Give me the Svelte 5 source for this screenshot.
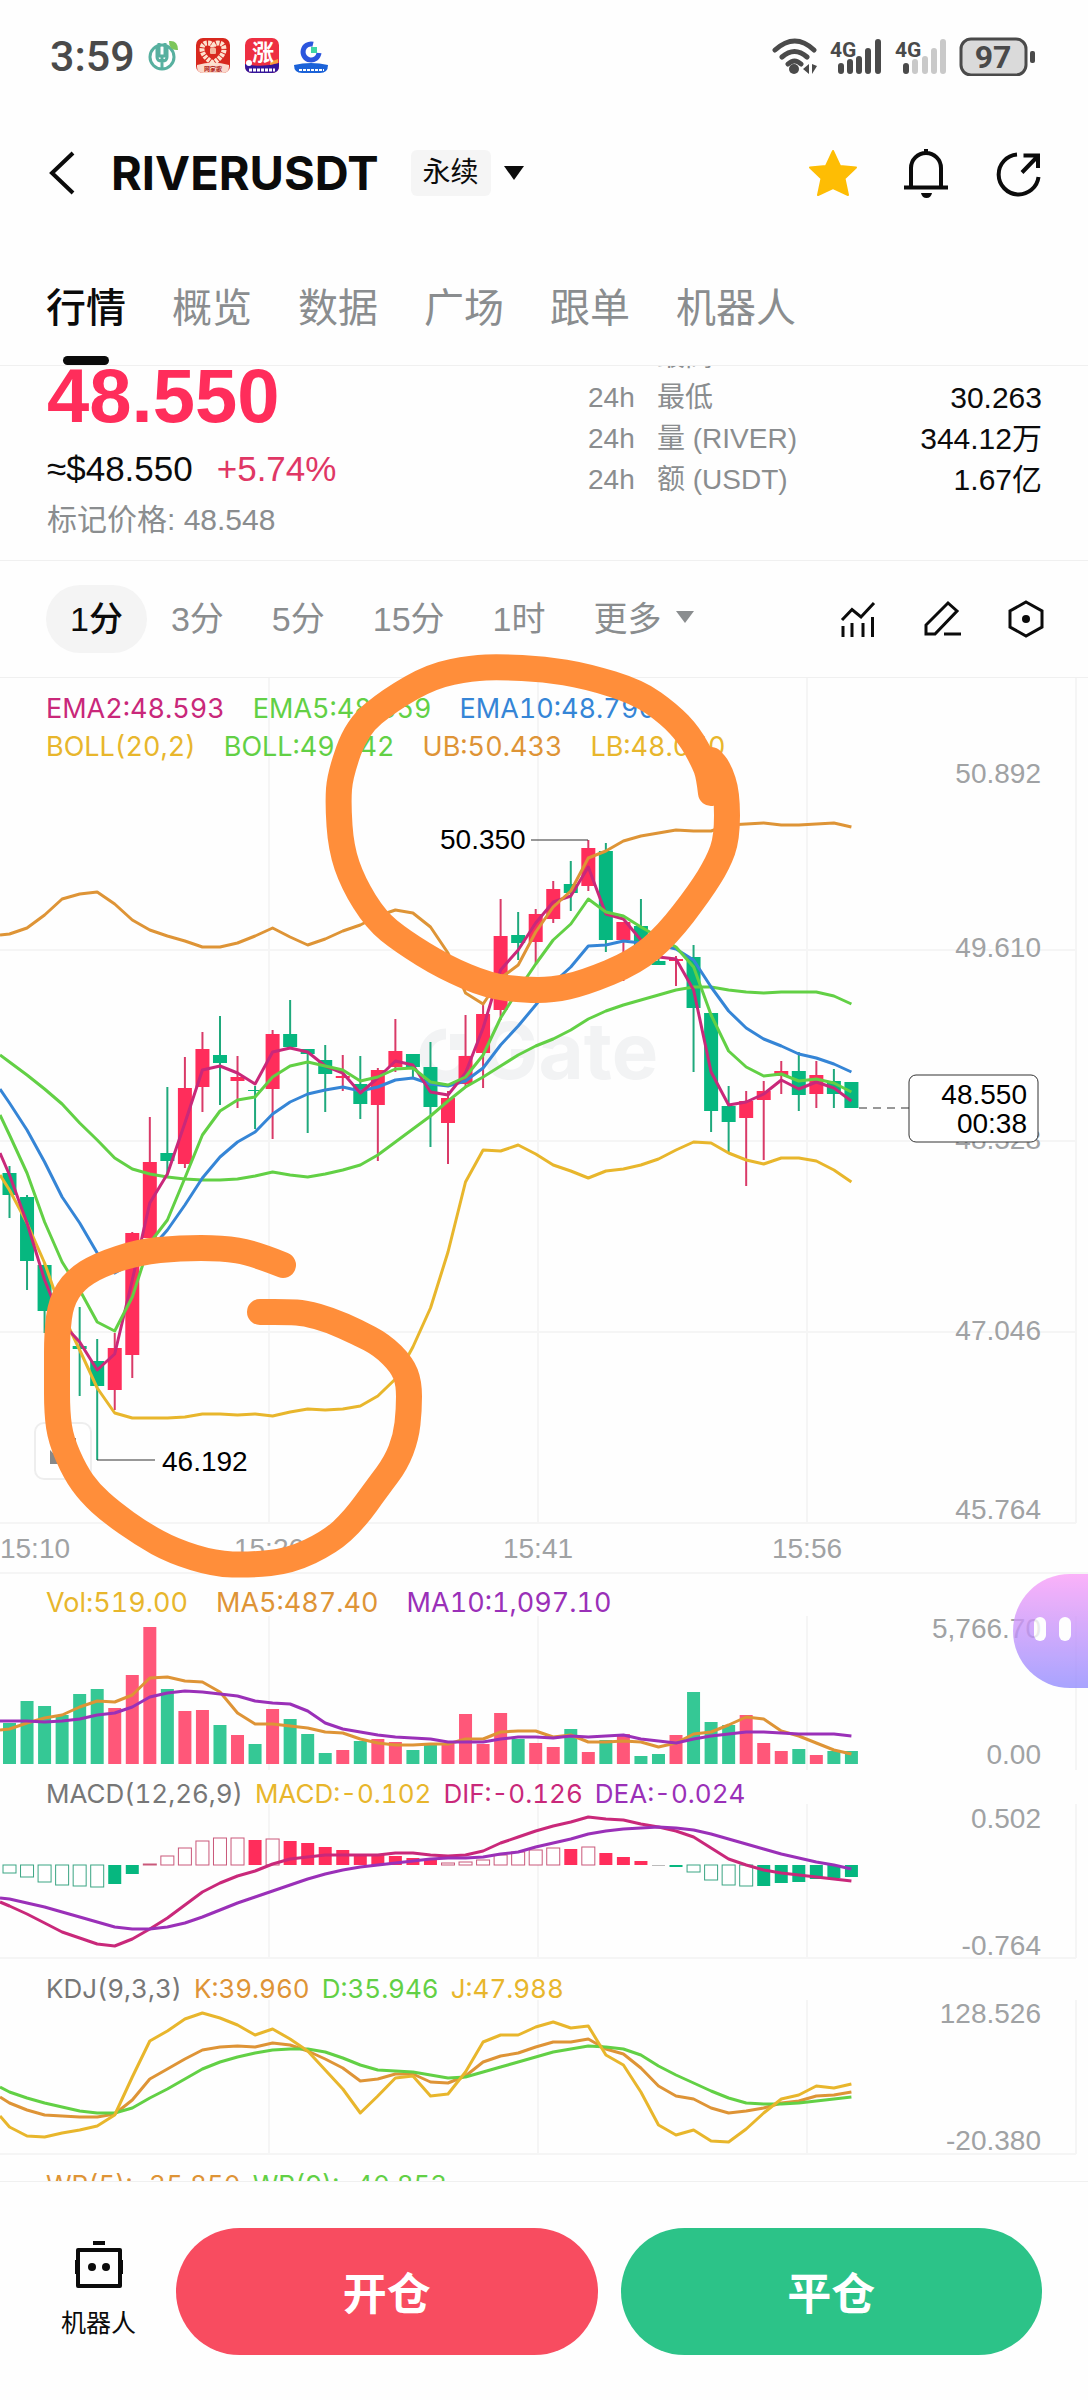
<script>
	let activeTab = "行情";
	let activeFrame = "1分";

	const tabs = ["行情", "概览", "数据", "广场", "跟单", "机器人"];
	const frames = ["1分", "3分", "5分", "15分", "1时"];
	const stats = [
		["最高", ""],
		["最低", "30.263"],
		["量 (RIVER)", "344.12万"],
		["额 (USDT)", "1.67亿"],
	];

	const MAGENTA = "#c9287a";
	const GREEN = "#62d045";
	const BLUE = "#3585d6";
	const ORANGE = "#de9436";
	const GOLD = "#e8b62c";
	const PURPLE = "#9a30b8";
	const UP = "#ff2d5b";
	const DOWN = "#06b77f";

	const mainLegend = [
		[
			["EMA2:48.593", MAGENTA],
			["EMA5:48.659", GREEN],
			["EMA10:48.790", BLUE],
		],
		[
			["BOLL(20,2)", GOLD],
			["BOLL:49.242", GREEN],
			["UB:50.433", ORANGE],
			["LB:48.050", GOLD],
		],
	];
	const volLegend = [
		["Vol:519.00", GOLD],
		["MA5:487.40", ORANGE],
		["MA10:1,097.10", PURPLE],
	];
	const macdLegend = [
		["MACD(12,26,9)", "#777"],
		["MACD:-0.102", GOLD],
		["DIF:-0.126", MAGENTA],
		["DEA:-0.024", PURPLE],
	];
	const kdjLegend = [
		["KDJ(9,3,3)", "#777"],
		["K:39.960", ORANGE],
		["D:35.946", GREEN],
		["J:47.988", GOLD],
	];
	const wrLegend = [
		["WR(5):-35.850", ORANGE],
		["WR(9):-40.853", GREEN],
	];

	const STEP = 17.54;
	const x = (i) => 9.5 + i * STEP;

	// high, body top, body bottom, low, 1 = up
	const candles = [
		[488, 495, 517, 540, 0], [517, 519, 583, 612, 0], [585, 587, 633, 655, 0], [628, 633, 668, 690, 0],
		[629, 668, 671, 718, 0], [661, 683, 708, 782, 0], [655, 670, 712, 732, 1], [554, 555, 677, 700, 1],
		[439, 484, 560, 560, 1], [409, 475, 483, 500, 0], [379, 410, 486, 490, 1], [354, 371, 409, 434, 1],
		[338, 377, 385, 427, 0], [378, 399, 403, 430, 1], [408, 412, 413, 451, 0], [352, 356, 411, 461, 1],
		[322, 356, 369, 369, 0], [371, 371, 376, 455, 0], [367, 382, 396, 434, 0], [377, 398, 400, 413, 1],
		[378, 406, 426, 441, 0], [390, 392, 427, 483, 1], [341, 373, 389, 394, 1], [376, 376, 389, 400, 0],
		[364, 389, 429, 469, 0], [413, 420, 445, 486, 1], [337, 378, 406, 408, 1], [325, 336, 375, 410, 1],
		[221, 258, 332, 342, 1], [234, 257, 265, 282, 0], [231, 236, 264, 285, 1], [203, 211, 241, 245, 1],
		[183, 206, 215, 233, 0], [162, 170, 208, 213, 1], [165, 173, 262, 274, 0], [244, 244, 262, 303, 1],
		[221, 248, 269, 279, 0], [279, 283, 287, 287, 0], [278, 281, 283, 308, 1], [267, 279, 330, 394, 0],
		[335, 335, 433, 454, 0], [408, 428, 444, 474, 0], [413, 423, 440, 508, 1], [403, 413, 422, 482, 1],
		[383, 393, 398, 416, 1], [374, 393, 417, 433, 0], [383, 397, 416, 430, 1], [391, 403, 416, 430, 0],
		[404, 404, 430, 430, 0],
	];

	// every series starts with its value at the left edge, then one value per candle
	const mainLines = [
		[GOLD, [497, 512, 545, 585, 635, 672, 710, 735, 740, 740, 740, 739, 736, 736, 737, 736, 738, 734, 731, 732, 731, 728, 718, 701, 669, 630, 574, 504, 472, 473, 467, 476, 487, 493, 500, 493, 491, 487, 481, 472, 464, 465, 475, 482, 486, 480, 480, 483, 492, 504]],
		[GREEN, [377, 384, 397, 411, 426, 445, 462, 480, 491, 496, 499, 501, 502, 502, 501, 498, 494, 497, 499, 496, 492, 487, 477, 464, 451, 438, 423, 409, 399, 388, 377, 368, 361, 352, 341, 333, 327, 322, 317, 312, 309, 309, 312, 314, 315, 314, 314, 314, 318, 326]],
		[BLUE, [411, 425, 452, 484, 519, 545, 575, 595, 585, 572, 552, 527, 500, 479, 464, 454, 436, 424, 416, 412, 409, 413, 409, 402, 400, 406, 408, 403, 390, 367, 348, 327, 305, 289, 268, 267, 263, 265, 267, 271, 282, 309, 333, 350, 361, 368, 376, 380, 386, 394]],
		[MAGENTA, [475, 497, 545, 602, 645, 664, 692, 676, 602, 525, 496, 445, 392, 388, 395, 406, 374, 370, 374, 388, 395, 415, 400, 383, 387, 414, 417, 395, 350, 292, 272, 245, 224, 218, 189, 236, 241, 262, 279, 281, 312, 394, 427, 424, 416, 402, 411, 404, 410, 423]],
		[GREEN, [437, 457, 495, 544, 584, 612, 644, 653, 619, 565, 542, 500, 457, 433, 422, 419, 399, 388, 384, 388, 392, 403, 399, 391, 390, 404, 407, 399, 377, 340, 312, 286, 262, 246, 221, 234, 238, 249, 259, 269, 289, 337, 373, 389, 398, 396, 403, 401, 405, 414]],
		[ORANGE, [257, 256, 250, 237, 221, 216, 214, 226, 242, 252, 258, 263, 269, 269, 265, 258, 250, 259, 267, 261, 253, 247, 238, 232, 235, 249, 275, 315, 326, 300, 287, 254, 229, 213, 180, 173, 163, 158, 155, 152, 153, 153, 147, 146, 145, 147, 147, 146, 145, 149]],
	];

	const volumes = [149, 127, 132, 141, 120, 115, 134, 101, 53, 115, 137, 136, 151, 161, 170, 135, 145, 160, 179, 176, 167, 165, 168, 176, 170, 170, 140, 170, 139, 165, 169, 173, 155, 178, 166, 160, 182, 180, 161, 118, 148, 151, 141, 169, 177, 175, 181, 177, 177];
	const volLines = [
		[ORANGE, [156, 155, 149, 144, 141, 133, 127, 128, 121, 104, 103, 107, 108, 118, 139, 150, 150, 152, 154, 158, 159, 165, 169, 171, 171, 170, 170, 165, 165, 158, 157, 157, 163, 161, 168, 168, 167, 168, 173, 169, 160, 158, 151, 143, 145, 157, 162, 169, 176, 180]],
		[PURPLE, [147, 147, 147, 148, 147, 145, 141, 139, 133, 123, 119, 117, 118, 120, 122, 127, 129, 130, 137, 149, 155, 158, 161, 163, 164, 165, 168, 168, 168, 165, 163, 163, 164, 162, 163, 162, 161, 165, 167, 169, 165, 162, 160, 158, 158, 159, 160, 160, 160, 162]],
	];

	const macd = [-8, -12, -17, -20, -21, -22, -19, -9, 1, 9, 17, 24, 27, 27, 25, 26, 24, 22, 18, 15, 11, 10, 9, 7, 5, 2, 3, 5, 10, 13, 15, 17, 16, 18, 12, 8, 4, 0, -2, -7, -15, -20, -21, -21, -18, -17, -14, -13, -12];
	const macdLines = [
		[MAGENTA, [132, 136, 144, 153, 162, 168, 174, 176, 169, 159, 148, 135, 122, 113, 106, 101, 94, 89, 87, 85, 85, 85, 85, 83, 83, 85, 86, 85, 81, 73, 67, 61, 56, 52, 47, 49, 50, 54, 57, 61, 67, 78, 89, 95, 100, 103, 105, 107, 109, 111]],
		[PURPLE, [128, 129, 133, 137, 142, 147, 152, 157, 159, 159, 157, 153, 147, 140, 133, 127, 121, 115, 109, 104, 100, 97, 95, 93, 91, 89, 88, 88, 87, 84, 82, 77, 73, 69, 64, 61, 59, 58, 57, 58, 60, 64, 69, 74, 79, 84, 88, 92, 95, 99]],
	];

	const kdjLines = [
		[ORANGE, [137, 143, 150, 155, 156, 157, 157, 154, 140, 119, 109, 99, 90, 87, 86, 87, 83, 85, 91, 99, 108, 121, 119, 114, 114, 122, 123, 116, 102, 96, 93, 87, 82, 82, 79, 89, 94, 108, 126, 136, 139, 148, 153, 151, 148, 143, 141, 136, 135, 132]],
		[GREEN, [127, 132, 138, 143, 147, 151, 153, 153, 148, 138, 129, 119, 109, 102, 97, 93, 90, 89, 89, 92, 98, 105, 110, 111, 112, 115, 118, 117, 112, 107, 102, 97, 92, 89, 86, 87, 89, 95, 106, 115, 123, 131, 138, 143, 144, 144, 143, 141, 139, 137]],
		[GOLD, [156, 167, 176, 177, 173, 170, 166, 155, 117, 81, 71, 59, 53, 58, 65, 75, 69, 79, 91, 110, 129, 153, 136, 118, 116, 136, 134, 112, 82, 75, 75, 67, 62, 68, 66, 95, 105, 132, 165, 175, 170, 181, 182, 169, 153, 139, 135, 126, 128, 124]],
	];

	const gridX = [269, 538, 807, 1076];

	const isHollow = (i) => i === 0 || Math.abs(macd[i]) > Math.abs(macd[i - 1]) || [8, 12, 13, 25, 42].includes(i);
	const isFilled = (i) => macd[i] < 0 && (i === 38 || i > 42);

	function line(values) {
		return values.map((y, i) => `${i === 0 ? 0 : x(i - 1).toFixed(1)},${y}`).join(" ");
	}

	const marks = [
		[[711, 115], [709, 98], [704, 84], [689, 57], [669, 36], [638, 14], [586, -2], [544, -9], [500, -11], [472, -10], [432, -2], [390, 22], [357, 49], [340, 97], [338, 125], [341, 170], [353, 205], [376, 242], [402, 263], [444, 289], [489, 308], [524, 312], [552, 312], [584, 305], [635, 284], [667, 257], [700, 214], [718, 185], [727, 160], [727, 115], [719, 91], [711, 82]],
		[[283, 587], [253, 575], [222, 570], [180, 570], [139, 574], [99, 587], [75, 602], [61, 624], [57, 655], [57, 695], [57, 735], [61, 762], [75, 794], [90, 815], [111, 834], [142, 856], [173, 873], [215, 886], [250, 887], [290, 883], [330, 864], [354, 842], [378, 809], [396, 785], [406, 759], [409, 732], [409, 705], [402, 687], [382, 667], [357, 654], [330, 642], [305, 635], [288, 634], [260, 634]],
	];

	function smooth(points) {
		let d = `M${points[0]}`;
		for (let i = 1; i < points.length - 1; i++) {
			const [ax, ay] = points[i];
			const [bx, by] = points[i + 1];
			d += ` Q${ax},${ay} ${(ax + bx) / 2},${(ay + by) / 2}`;
		}
		return d + ` L${points[points.length - 1]}`;
	}
</script>

<div class="page">
	<div class="status">
		<span class="time">3:59</span>
		<div class="apps">
			<svg width="35" height="36" viewBox="0 0 35 36" aria-hidden="true">
				<circle cx="15" cy="19" r="12" fill="none" stroke="#57b09f" stroke-width="3" />
				<path d="M12 5v13h6V5M15 18v14M10 9v10q0 4 5 4t5-4V9" fill="none" stroke="#57b09f" stroke-width="3" />
				<path d="M22 3q9-1 9 9q-9 1-9-9z" fill="#7cc65a" />
			</svg>
			<svg width="35" height="36" viewBox="0 0 35 36" aria-hidden="true">
				<rect width="34" height="35" rx="7" fill="#d8281e" />
				<path d="M1 27q16-5 32 0v2q0 6-7 6H8q-7 0-7-6z" fill="#fbd9cc" />
				<path d="M17 25Q6 18 6 11.500t6-6.500q4 0 5 4q1-4 5-4q6 0 6 6.500T17 25z" fill="none" stroke="#fde3cf" stroke-width="5" stroke-dasharray="3 1" />
				<rect x="14" y="10" width="6" height="6" rx="1" fill="#f3b9a0" />
				<text x="17" y="33" class="app-tag" fill="#b3261b" text-anchor="middle">网家歌</text>
			</svg>
			<svg width="35" height="36" viewBox="0 0 35 36" aria-hidden="true">
				<rect width="34" height="35" rx="7" fill="#ee2f42" />
				<path d="M0 26q17 4 34-1v3q0 7-7 7H7q-7 0-7-7z" fill="#35169a" />
				<path d="M25 24l8-3v4l-8 2z" fill="#f6a13d" />
				<text x="18" y="22" class="app-char" fill="#fff" text-anchor="middle">涨</text>
				<circle cx="4" cy="25" r="3" fill="#fff" />
				<path d="M4 32h26" stroke="#fff" stroke-width="3" stroke-dasharray="3 1" />
			</svg>
			<svg width="35" height="36" viewBox="0 0 35 36" aria-hidden="true">
				<path d="M19 6.200A8 8 0 1 0 25 15" fill="none" stroke="#2b55dd" stroke-width="5" />
				<rect x="17" y="9" width="6" height="6" fill="#3fd6a4" />
				<path d="M0 27q17-4 34 0q0 8-8 8H8q-8 0-8-8z" fill="#1b62d8" />
				<path d="M5 32h25" stroke="#fff" stroke-width="2" stroke-dasharray="3 1" />
			</svg>
		</div>
		<svg class="signals" width="267" height="40" viewBox="0 0 267 40" aria-hidden="true">
			<g fill="none" stroke="#4a4a4a" stroke-width="5" stroke-linecap="round">
				<path d="M4 14q20-18 39 0M11 21q12.500-11 25 0M17 28q6.500-6 13 0" />
			</g>
			<circle cx="23" cy="33" r="5" fill="#4a4a4a" />
			<path d="M38 28v10l-6-5zM41 28v10l5-8z" fill="#4a4a4a" />
			<text x="59" y="21" class="net">4G</text>
			<text x="124" y="21" class="net">4G</text>
			<g stroke="#4a4a4a" stroke-width="6" stroke-linecap="round">
				<path d="M70 30v5M79 26v9M88 23v12M97 15v20M107 6v29M135 30v5" />
				<path d="M144 26v9M154 23v12M163 15v20M172 6v29" stroke="#c9c9c9" />
			</g>
			<rect x="190" y="3" width="65" height="36" rx="10" fill="#dadada" stroke="#4a4a4a" stroke-width="3" />
			<rect x="259" y="15" width="5" height="12" rx="2" fill="#4a4a4a" />
			<text x="222" y="32" class="battery" text-anchor="middle">97</text>
		</svg>
	</div>

	<header class="title-row">
		<button class="icon-btn" aria-label="返回">
			<svg width="26" height="44" viewBox="0 0 26 44"><path d="M24 2L3 22L24 42" fill="none" stroke="#0b0b0b" stroke-width="4" /></svg>
		</button>
		<h1>RIVERUSDT</h1>
		<button class="pair-type"><span class="tag">永续</span><span class="caret"></span></button>
		<div class="actions">
			<button class="icon-btn" aria-label="收藏">
				<svg width="50" height="50" viewBox="0 0 50 50"><path d="M25 3L32 18L48 19.500L36.500 30.500L40 47L25 40L10 47L13.500 30.500L2 19.500L18 18Z" fill="#febd04" stroke="#febd04" stroke-width="2" stroke-linejoin="round" /></svg>
			</button>
			<button class="icon-btn" aria-label="提醒">
				<svg width="50" height="50" viewBox="0 0 50 50"><path d="M10 39V20a15 15 0 0 1 30 0V39M3 39.500H47M25 1V7" fill="none" stroke="#0b0b0b" stroke-width="4" /><path d="M20 45h11q-1 5-5.500 5T20 45z" fill="#0b0b0b" /></svg>
			</button>
			<button class="icon-btn" aria-label="分享">
				<svg width="50" height="50" viewBox="0 0 50 50"><path d="M23 6.500A20 20 0 1 0 44.500 29M28 24.500L43 9M29.500 7.500H44V20" fill="none" stroke="#0b0b0b" stroke-width="4" /></svg>
			</button>
		</div>
	</header>

	<nav class="tabs">
		{#each tabs as tab}
			<button class:active={tab === activeTab} on:click={() => (activeTab = tab)}>{tab}</button>
		{/each}
	</nav>

	<section class="ticker">
		<div>
			<div class="price">48.550</div>
			<div class="change"><span>≈$48.550</span><span class="up">+5.74%</span></div>
			<div class="mark">标记价格: 48.548</div>
		</div>
		<dl class="stats">
			{#each stats as [label, value]}
				<div class="stat">
					<dt><span>24h</span>{label}</dt>
					<dd>{value}</dd>
				</div>
			{/each}
		</dl>
	</section>

	<div class="toolbar">
		{#each frames as frame}
			<button class="frame" class:active={frame === activeFrame} on:click={() => (activeFrame = frame)}>{frame}</button>
		{/each}
		<button class="frame more">更多<span class="caret"></span></button>
		<div class="tools">
			<button class="icon-btn" aria-label="指标">
				<svg width="40" height="40" viewBox="0 0 40 40"><path d="M4 21L14 10.500L23 18L36 4M5 27V38M14 24V38M25 24V38M34.500 18V38" fill="none" stroke="#0b0b0b" stroke-width="3" /></svg>
			</button>
			<button class="icon-btn" aria-label="画线">
				<svg width="40" height="40" viewBox="0 0 40 40"><path d="M4 35V26L26 4L35 12L13 35ZM22 35H39" fill="none" stroke="#0b0b0b" stroke-width="3" /></svg>
			</button>
			<button class="icon-btn" aria-label="设置">
				<svg width="40" height="40" viewBox="0 0 40 40"><path d="M20 3L36 12V28L20 37L4 28V12Z" fill="none" stroke="#0b0b0b" stroke-width="3" /><circle cx="20" cy="20" r="4" fill="#0b0b0b" /></svg>
			</button>
		</div>
	</div>

	<section class="panel">
		<svg class="plot" viewBox="0 0 1088 896">
			<g class="grid">
				{#each gridX as gx}<path d="M{gx} 0V845" />{/each}
				<path d="M0 272H1076M0 463H1076M0 654H1076M0 845H1076" />
				<path d="M0 895H1088" />
			</g>
			<g class="watermark">
				<path d="M446 356A21 21 0 1 0 467 377" fill="none" stroke="#f2f3f4" stroke-width="11" />
				<rect x="450" y="356" width="16" height="16" />
				<text x="480" y="401">Gate</text>
			</g>
			<g class="axis" text-anchor="end">
				<text x="1041" y="105">50.892</text>
				<text x="1041" y="279">49.610</text>
				<text x="1041" y="471">48.328</text>
				<text x="1041" y="662">47.046</text>
				<text x="1041" y="841">45.764</text>
			</g>
			<g class="axis" text-anchor="middle">
				<text x="35" y="880">15:10</text>
				<text x="269" y="880">15:26</text>
				<text x="538" y="880">15:41</text>
				<text x="807" y="880">15:56</text>
			</g>
			{#each candles as [high, top, bottom, low, up], i}
				<path d="M{x(i)} {high}V{low}" stroke={up ? "#d93a68" : "#1fa97c"} stroke-width="2" />
				<rect x={x(i) - 7} y={top} width="14" height={bottom - top} fill={up ? UP : DOWN} />
			{/each}
			{#each mainLines as [color, values]}
				<polyline points={line(values)} stroke={color} />
			{/each}
			<g class="note">
				<path d="M531 162H588M97 782H155" />
				<path d="M859 430H909" stroke-dasharray="8 6" />
				<text x="440" y="171">50.350</text>
				<text x="162" y="793">46.192</text>
				<rect x="909" y="397" width="129" height="67" rx="7" fill="#fff" />
				<text x="1027" y="426" text-anchor="end">48.550</text>
				<text x="1027" y="455" text-anchor="end">00:38</text>
			</g>
		</svg>
		<div class="legend main">
			{#each mainLegend as row}
				<div class="legend-row">
					{#each row as [text, color]}<span style="color: {color}">{text}</span>{/each}
				</div>
			{/each}
		</div>
		<button class="expand" aria-label="全屏">
			<svg width="28" height="28" viewBox="0 0 28 28"><path d="M1 13L15 27H1ZM27 15L13 1H27Z" fill="#888" /></svg>
		</button>
		<svg class="marks" viewBox="0 0 1088 896" aria-hidden="true">
			{#each marks as points}<path d={smooth(points)} />{/each}
		</svg>
	</section>

	<section class="panel">
		<svg class="plot" viewBox="0 0 1088 196">
			<g class="grid">
				{#each gridX as gx}<path d="M{gx} 42V196" />{/each}
			</g>
			{#each volumes as top, i}
				<rect x={x(i) - 6.5} y={top} width="13" height={190 - top} fill={candles[i][4] ? "#ff5779" : "#35c895"} />
			{/each}
			{#each volLines as [color, values]}
				<polyline points={line(values)} stroke={color} />
			{/each}
			<g class="axis" text-anchor="end">
				<text x="1041" y="64">5,766.70</text>
				<text x="1041" y="190">0.00</text>
			</g>
		</svg>
		<div class="legend vol">
			<div class="legend-row">
				{#each volLegend as [text, color]}<span style="color: {color}">{text}</span>{/each}
			</div>
		</div>
		<button class="assistant" aria-label="助手"><i></i><i></i></button>
	</section>

	<section class="panel">
		<svg class="plot" viewBox="0 0 1088 190">
			<g class="grid">
				{#each gridX as gx}<path d="M{gx} 34V188" />{/each}
				<path d="M0 188H1076" />
			</g>
			{#each macd as value, i}
				{@const color = value > 0 ? UP : value < 0 ? DOWN : "#bbb"}
				{#if isHollow(i) && !isFilled(i)}
					<rect x={x(i) - 6.5} y={value > 0 ? 95 - value : 95} width="13" height={Math.abs(value)} fill="#fff" stroke={value > 0 ? "#c9587a" : "#3aa583"} />
				{:else}
					<rect x={x(i) - 6.5} y={value > 0 ? 95 - value : 95} width="13" height={Math.max(Math.abs(value), 1)} fill={color} />
				{/if}
			{/each}
			{#each macdLines as [color, values]}
				<polyline points={line(values)} stroke={color} />
			{/each}
			<g class="axis" text-anchor="end">
				<text x="1041" y="58">0.502</text>
				<text x="1041" y="185">-0.764</text>
			</g>
		</svg>
		<div class="legend macd">
			<div class="legend-row tight">
				{#each macdLegend as [text, color]}<span style="color: {color}">{text}</span>{/each}
			</div>
		</div>
	</section>

	<section class="panel">
		<svg class="plot" viewBox="0 0 1088 206">
			<g class="grid">
				{#each gridX as gx}<path d="M{gx} 40V194" />{/each}
				<path d="M0 194H1076" />
			</g>
			{#each kdjLines as [color, values]}
				<polyline points={line(values)} stroke={color} />
			{/each}
			<g class="axis" text-anchor="end">
				<text x="1041" y="63">128.526</text>
				<text x="1041" y="190">-20.380</text>
			</g>
		</svg>
		<div class="legend vol">
			<div class="legend-row tight">
				{#each kdjLegend as [text, color]}<span style="color: {color}">{text}</span>{/each}
			</div>
		</div>
	</section>

	<div class="wr">
		<div class="legend-row tight">
			{#each wrLegend as [text, color]}<span style="color: {color}">{text}</span>{/each}
		</div>
	</div>

	<footer>
		<button class="robot">
			<svg width="50" height="48" viewBox="0 0 50 48"><path d="M4 9H46V45H4Z" fill="none" stroke="#0b0b0b" stroke-width="4" stroke-linejoin="round" /><path d="M19 0H31V4H19ZM1 19H4V33H1ZM46 19H49V33H46Z" fill="#0b0b0b" /><circle cx="18" cy="26" r="4" fill="#0b0b0b" /><circle cx="32" cy="26" r="4" fill="#0b0b0b" /></svg>
			机器人
		</button>
		<button class="trade open">开仓</button>
		<button class="trade close">平仓</button>
	</footer>
</div>

<style>
	:global(body) {
		background: #fefefe;
	}
	.page {
		display: flex;
		flex-direction: column;
		overflow: hidden;
		color: #0b0b0b;
		font-family: "Liberation Sans", "Noto Sans CJK SC", sans-serif;
	}
	button {
		padding: 0;
		border: 0;
		background: none;
		color: inherit;
		font: inherit;
		cursor: pointer;
	}
	svg {
		display: block;
	}

	.status {
		display: flex;
		align-items: center;
		height: 112px;
		padding: 0 50px;
		color: #4a4a4a;
	}
	.time {
		font: 500 43px/48px Roboto, sans-serif;
	}
	.apps {
		display: flex;
		gap: 14px;
		margin-left: 12px;
	}
	.app-tag {
		font: bold 6px "Noto Sans CJK SC", sans-serif;
	}
	.app-char {
		font: bold 22px "Noto Sans CJK SC", sans-serif;
	}
	.signals {
		margin-left: auto;
	}
	.net {
		font: bold 21px Roboto, sans-serif;
		fill: #4a4a4a;
	}
	.battery {
		font: bold 32px Roboto, sans-serif;
		fill: #4a4a4a;
	}

	.title-row {
		display: flex;
		align-items: center;
		height: 122px;
		padding: 0 44px 0 49px;
	}
	h1 {
		margin: 0 32px 0 36px;
		font: bold 47px/56px Inter, sans-serif;
	}
	.pair-type {
		display: flex;
		align-items: center;
		gap: 13px;
	}
	.tag {
		padding: 0 12px;
		border-radius: 6px;
		background: #f5f5f5;
		font-size: 28px;
		line-height: 46px;
	}
	.caret {
		border: 10px solid transparent;
		border-top: 14px solid;
		border-bottom: 0;
	}
	.actions {
		display: flex;
		gap: 43px;
		margin-left: auto;
	}

	.tabs {
		display: flex;
		gap: 46px;
		height: 131px;
		padding: 0 46px;
		border-bottom: 1px solid #f0f0f0;
		color: #8a8d8f;
		font-size: 40px;
	}
	.tabs button {
		position: relative;
		padding-top: 10px;
	}
	.tabs .active {
		color: #0b0b0b;
		font-weight: 500;
	}
	.tabs .active::after {
		content: "";
		position: absolute;
		bottom: 0;
		left: 17px;
		width: 46px;
		height: 9px;
		border-radius: 5px;
		background: #0b0b0b;
	}

	.ticker {
		display: flex;
		justify-content: space-between;
		height: 194px;
		padding: 0 46px 0 47px;
		overflow: hidden;
		border-bottom: 1px solid #f0f0f0;
	}
	.price {
		color: #ff2d5b;
		font-size: 76px;
		font-weight: bold;
		line-height: 60px;
	}
	.change {
		display: flex;
		gap: 24px;
		margin-top: 19px;
		font-size: 35px;
		line-height: 48px;
	}
	.up {
		color: #e03765;
	}
	.mark {
		margin-top: 7px;
		color: #8a8d8f;
		font-size: 30px;
		line-height: 40px;
	}
	.stats {
		width: 454px;
		margin: -30px 0 0;
		font-size: 28px;
		line-height: 41px;
	}
	.stat {
		display: flex;
		justify-content: space-between;
	}
	dt {
		color: #8a8d8f;
	}
	dt span {
		display: inline-block;
		width: 69px;
	}
	dd {
		margin: 0;
		font-size: 30px;
	}

	.toolbar {
		display: flex;
		align-items: center;
		height: 116px;
		padding: 0 42px 0 46px;
		border-bottom: 1px solid #f0f0f0;
	}
	.frame {
		height: 68px;
		padding: 0 24px 5px;
		border-radius: 34px;
		color: #8a8d8f;
		font-size: 34px;
	}
	.frame.active {
		background: #f4f4f4;
		color: #0b0b0b;
		font-weight: 500;
	}
	.more {
		display: flex;
		align-items: center;
		gap: 14px;
	}
	.more .caret {
		border-width: 12px 9px 0;
	}
	.tools {
		display: flex;
		gap: 44px;
		margin-left: auto;
	}

	.panel {
		position: relative;
	}
	.plot {
		width: 100%;
	}
	.grid path {
		stroke: #f5f5f5;
		stroke-width: 2;
	}
	.watermark {
		fill: #f2f3f4;
		font: bold 78px Inter, sans-serif;
	}
	.axis {
		fill: #a0a2a4;
		font-size: 28px;
	}
	.note {
		font-size: 28px;
	}
	.note path,
	.note rect {
		stroke: #333;
	}
	polyline {
		fill: none;
		stroke-width: 3;
		stroke-linejoin: round;
	}
	.legend {
		position: absolute;
		left: 46px;
	}
	.legend.main {
		top: 12px;
	}
	.legend.vol {
		top: 10px;
	}
	.legend.macd {
		top: 5px;
	}
	.legend-row {
		display: flex;
		gap: 28px;
		font: 27px/38px Inter, sans-serif;
		font-variant-numeric: tabular-nums;
		white-space: nowrap;
	}
	.legend-row.tight {
		gap: 12px;
		font-size: 26px;
	}
	.expand {
		position: absolute;
		bottom: 94px;
		left: 34px;
		display: grid;
		place-items: center;
		width: 58px;
		height: 58px;
		border: 2px solid #eee;
		border-radius: 10px;
		background: #fff;
	}
	.marks {
		position: absolute;
		z-index: 1;
		inset: 0;
		width: 100%;
		overflow: visible;
		pointer-events: none;
	}
	.marks path {
		fill: none;
		stroke: #ff8e3a;
		stroke-width: 26;
		stroke-linecap: round;
		stroke-linejoin: round;
	}
	.assistant {
		position: absolute;
		top: 0;
		right: 0;
		display: flex;
		align-items: center;
		gap: 13px;
		width: 75px;
		height: 114px;
		padding: 0 0 4px 21px;
		border-radius: 57px 0 0 57px;
		background: linear-gradient(#fa9df8, #918bff);
		opacity: 0.78;
	}
	.assistant i {
		width: 12px;
		height: 24px;
		border-radius: 6px;
		background: #fff;
	}
	.wr {
		height: 15px;
		padding: 0 46px;
		overflow: hidden;
	}

	footer {
		display: flex;
		align-items: center;
		gap: 23px;
		height: 218px;
		padding: 0 46px 0 61px;
		border-top: 1px solid #f0f0f0;
		background: #fefefe;
	}
	.robot {
		display: flex;
		flex-direction: column;
		align-items: center;
		gap: 15px;
		margin-right: 17px;
		font-size: 25px;
		line-height: 38px;
	}
	.trade {
		flex: 1;
		height: 127px;
		border-radius: 64px;
		color: #fff;
		font-size: 44px;
		font-weight: bold;
	}
	.open {
		background: #f84c60;
	}
	.close {
		background: #2cc388;
	}
</style>
